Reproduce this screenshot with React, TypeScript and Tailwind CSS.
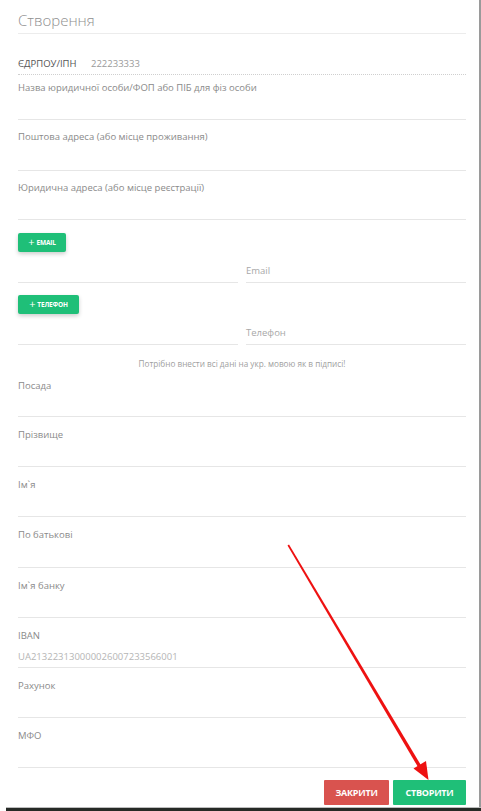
import React from "react";

const fields = ["Прізвище", "Ім`я", "По батькові", "Ім`я банку"];

function Field({
  label,
  h = "h-[50.2px]",
  pt = "pt-[11px]",
  children,
}: {
  label: string;
  h?: string;
  pt?: string;
  children?: React.ReactNode;
}) {
  return (
    <div className={`${h} ${pt} border-b border-[#e6e6e6]`}>
      <div className="text-[9.5px] leading-[14px] text-[#8a8a8a]">{label}</div>
      {children}
    </div>
  );
}

function GreenBtn({ children, w }: { children: React.ReactNode; w: string }) {
  return (
    <button
      className={`${w} h-[19px] bg-[#1fbf78] text-white rounded-[2px] shadow-[0_2px_4px_rgba(0,0,0,0.2)] flex items-center justify-center gap-[2px] text-[6.5px] font-bold tracking-tight`}
    >
      <span className="text-[11px] font-normal leading-none -mt-[2px]">+</span>
      {children}
    </button>
  );
}

export default function App() {
  return (
    <div className="relative w-[481px] h-[811px] bg-white overflow-hidden font-['Open_Sans',sans-serif]">
      <div className="absolute right-0 top-0 bottom-[4px] w-[2px] bg-[#9a9a9a]" />
      <div className="pl-[18px] pr-[15px] pt-[10px]">
        <div className="h-[24px] border-b border-[#ececec] text-[15px] leading-[20px] font-light text-[#8f8f8f]">
          Створення
        </div>

        <div className="mt-[21px] h-[20px] flex items-center border-b border-dotted border-[#cfcfcf] text-[9.5px]">
          <span className="text-[#555] w-[73px]">ЄДРПОУ/ІПН</span>
          <span className="text-[#9a9a9a]">222233333</span>
        </div>

        <Field label="Назва юридичної особи/ФОП або ПІБ для фіз особи" h="h-[45px]" pt="pt-[6px]" />
        <Field label="Поштова адреса (або місце проживання)" h="h-[51px]" pt="pt-[10px]" />
        <Field label="Юридична адреса (або місце реєстрації)" h="h-[49px]" pt="pt-[10px]" />

        <div className="mt-[13px]">
          <GreenBtn w="w-[48px]">EMAIL</GreenBtn>
        </div>
        <div className="flex gap-[8px] mt-[12px]">
          <div className="flex-1 h-[19px] border-b border-[#e6e6e6]" />
          <div className="flex-1 h-[19px] border-b border-[#e6e6e6] text-[9.5px] text-[#a8a8a8]">Email</div>
        </div>

        <div className="mt-[12px]">
          <GreenBtn w="w-[61px]">ТЕЛЕФОН</GreenBtn>
        </div>
        <div className="flex gap-[8px] mt-[12px]">
          <div className="flex-1 h-[19px] border-b border-[#e6e6e6]" />
          <div className="flex-1 h-[19px] border-b border-[#e6e6e6] text-[9.5px] text-[#a8a8a8]">Телефон</div>
        </div>

        <div className="mt-[14px] h-[10px] leading-[10px] text-center text-[8.2px] text-[#a0a0a0]">
          Потрібно внести всі дані на укр. мовою як в підписі!
        </div>

        <Field label="Посада" h="h-[48px]" pt="pt-[10px]" />
        {fields.map((f) => (
          <Field key={f} label={f} />
        ))}
        <Field label="IBAN">
          <div className="mt-[7px] text-[9.5px] text-[#b5b5b5]">UA213223130000026007233566001</div>
        </Field>
        <Field label="Рахунок" />
        <Field label="МФО" />

        <div className="flex justify-end gap-[4px] mt-[12px]">
          <button className="w-[65px] h-[25px] bg-[#d9534f] text-white text-[9px] font-bold tracking-tight rounded-[1px]">
            ЗАКРИТИ
          </button>
          <button className="w-[73px] h-[25px] bg-[#1fbf78] text-white text-[9px] font-bold tracking-tight rounded-[1px]">
            СТВОРИТИ
          </button>
        </div>
      </div>

      <div className="absolute left-[6px] right-0 bottom-0 h-[4px] bg-[#262a26] border-t border-[#bdbdbd]" />

      <svg className="absolute inset-0 pointer-events-none" width="481" height="811">
        <polygon points="287.5,545.5 289,544.6 422.6,768 419.6,769.8" fill="#ee1111" />
        <polygon points="428.5,780 413.5,768.5 426,761" fill="#ee1111" />
      </svg>
    </div>
  );
}
